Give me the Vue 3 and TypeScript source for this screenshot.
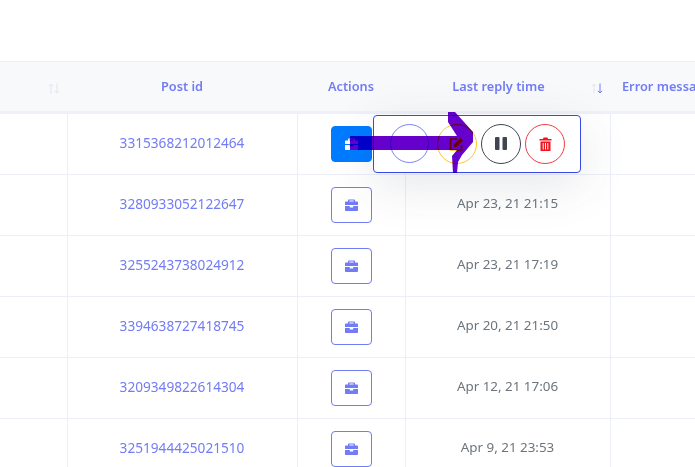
<script setup lang="ts">
interface Row { id: string; time: string }
const rows: Row[] = [
  { id: '3315368212012464', time: '' },
  { id: '3280933052122647', time: 'Apr 23, 21 21:15' },
  { id: '3255243738024912', time: 'Apr 23, 21 17:19' },
  { id: '3394638727418745', time: 'Apr 20, 21 21:50' },
  { id: '3209349822614304', time: 'Apr 12, 21 17:06' },
  { id: '3251944425021510', time: 'Apr 9, 21 23:53' },
]
const briefcase = 'M4 .5h5c.6 0 1 .4 1 1v1h2c.6 0 1 .4 1 1V6H0V3.5c0-.6.4-1 1-1h2v-1c0-.6.4-1 1-1zm.4 1.1v.9h4.200v-.9zM0 7h4.800v1.500h3.400V7H13v4c0 .6-.4 1-1 1H1c-.6 0-1-.4-1-1z'
</script>

<template>
  <div class="page">
    <table class="grid">
      <colgroup>
        <col class="c1" /><col class="c2" /><col class="c3" /><col class="c4" /><col class="c5" />
      </colgroup>
      <thead>
        <tr>
          <th class="sortable">
            <svg class="sort" width="12" height="11" viewBox="0 0 12 11"><path class="off" d="M3 10.500V1M.8 3.200 3 1l2.200 2.200M9 .5V10M6.800 7.800 9 10l2.200-2.200" /></svg>
          </th>
          <th>Post id</th>
          <th>Actions</th>
          <th class="sortable reply">Last reply time
            <svg class="sort" width="12" height="11" viewBox="0 0 12 11"><path class="off" d="M3 10.500V1M.8 3.200 3 1l2.200 2.200" /><path class="on" d="M9 .5V10M6.800 7.800 9 10l2.200-2.200" /></svg>
          </th>
          <th class="error">Error message</th>
        </tr>
      </thead>
      <tbody>
        <tr v-for="(r, i) in rows" :key="r.id">
          <td></td>
          <td class="link">{{ r.id }}</td>
          <td>
            <button class="tool" :class="{ active: i === 0 }" type="button" aria-label="Actions">
              <svg width="13" height="12" viewBox="0 0 13 12"><path :d="briefcase" fill="currentColor" fill-rule="evenodd" /></svg>
            </button>
          </td>
          <td class="time">{{ r.time }}</td>
          <td></td>
        </tr>
      </tbody>
    </table>

    <div class="popup">
      <span class="round blue"></span>
      <span class="round yellow">
        <svg width="16" height="14" viewBox="0 0 16 14"><path fill="none" stroke="#ffc107" stroke-width="1.700" d="M8 2H1.500v11h11V8" /><path fill="#ffc107" d="M5 7.500 11.500 1l2.500 2.500L7.500 10H5z" /></svg>
      </span>
      <span class="round dark">
        <svg width="12" height="13" viewBox="0 0 12 13"><rect x="0" y="0" width="4.500" height="13" rx="1" fill="#3f4650" /><rect x="7.500" y="0" width="4.500" height="13" rx="1" fill="#3f4650" /></svg>
      </span>
      <span class="round red">
        <svg width="13" height="14" viewBox="0 0 13 14"><path fill="#f0141e" fill-rule="evenodd" d="M4.500.5h4L9 2h3.500v1.500H.5V2H4zM1.500 4.500h10V14h-10zM3.700 6v6.500h1V6zm2.300 0v6.500h1V6zm2.300 0v6.500h1V6z" /></svg>
      </span>
    </div>

    <svg class="arrow" width="130" height="64" viewBox="0 0 130 64">
      <path fill="#6600cc" d="M0 24H107L98 10V0H105L123 20V30L112 43 108 50 107 61H103L102 44 107 38H0z" />
    </svg>
  </div>
</template>

<style>
html, body { margin: 0; background: #fff; }
</style>

<style scoped>
.page {
  position: relative;
  width: 695px;
  height: 467px;
  padding-top: 61px;
  box-sizing: border-box;
  overflow: hidden;
  font-family: "Noto Sans", "Open Sans", sans-serif;
  font-size: 13.4px;
  background: #fff;
}
.grid {
  table-layout: fixed;
  border-collapse: collapse;
  width: 732px;
}
.c1 { width: 67px; }
.c2 { width: 230px; }
.c3 { width: 108px; }
.c4 { width: 205px; }
.c5 { width: 122px; }
th {
  height: 47px;
  padding: 0 0 2px;
  background: #f8f9fa;
  color: #727cf5;
  font-weight: 600;
  font-size: 12.75px;
  text-align: center;
  white-space: nowrap;
  border-top: 1px solid #eef0f8;
  border-bottom: 3px solid #eef0fb;
}
th.sortable { position: relative; }
th.reply { padding-right: 18px; }
th.error { text-align: left; padding-left: 12px; }
.sort {
  position: absolute;
  right: 7px;
  top: 21px;
  fill: none;
  stroke-width: 1;
}
.off { stroke: #dfe4f7; }
.on { stroke: #727cf5; }
td {
  height: 60px;
  padding: 0;
  text-align: center;
  border-bottom: 1px solid #eceef8;
  border-left: 1px solid #eceef8;
}
td:first-child { border-left: 0; }
td.link, td.time { height: 56px; padding-bottom: 4px; }
.link { color: #727cf5; font-size: 13.65px; }
.time { color: #6c757d; }
.tool {
  display: inline-flex;
  align-items: center;
  justify-content: center;
  width: 41px;
  height: 36px;
  padding: 0;
  vertical-align: middle;
  color: #727cf5;
  background: #fff;
  border: 1px solid #727cf5;
  border-radius: 4px;
}
.tool.active {
  color: #fff;
  background: #007bff;
  border-color: #007bff;
}
.popup {
  position: absolute;
  left: 373px;
  top: 115px;
  width: 208px;
  height: 58px;
  box-sizing: border-box;
  display: flex;
  align-items: center;
  gap: 4px;
  padding: 0 0 1px 16px;
  background: #fff;
  border: 1px solid #3a48e8;
  border-radius: 4px;
  box-shadow: 0 12px 48px rgba(60, 70, 90, 0.13);
}
.round {
  display: flex;
  align-items: center;
  justify-content: center;
  width: 40px;
  height: 40px;
  box-sizing: border-box;
  border: 1px solid;
  border-radius: 50%;
}
.blue { width: 39px; height: 39px; border-color: #7a85f2; margin-right: 4px; }
.yellow { border-color: #ffc629; }
.dark { border-color: #3f4650; }
.red { border-color: #ee3e48; }
.arrow {
  position: absolute;
  left: 350px;
  top: 112px;
  mix-blend-mode: multiply;
}
</style>
